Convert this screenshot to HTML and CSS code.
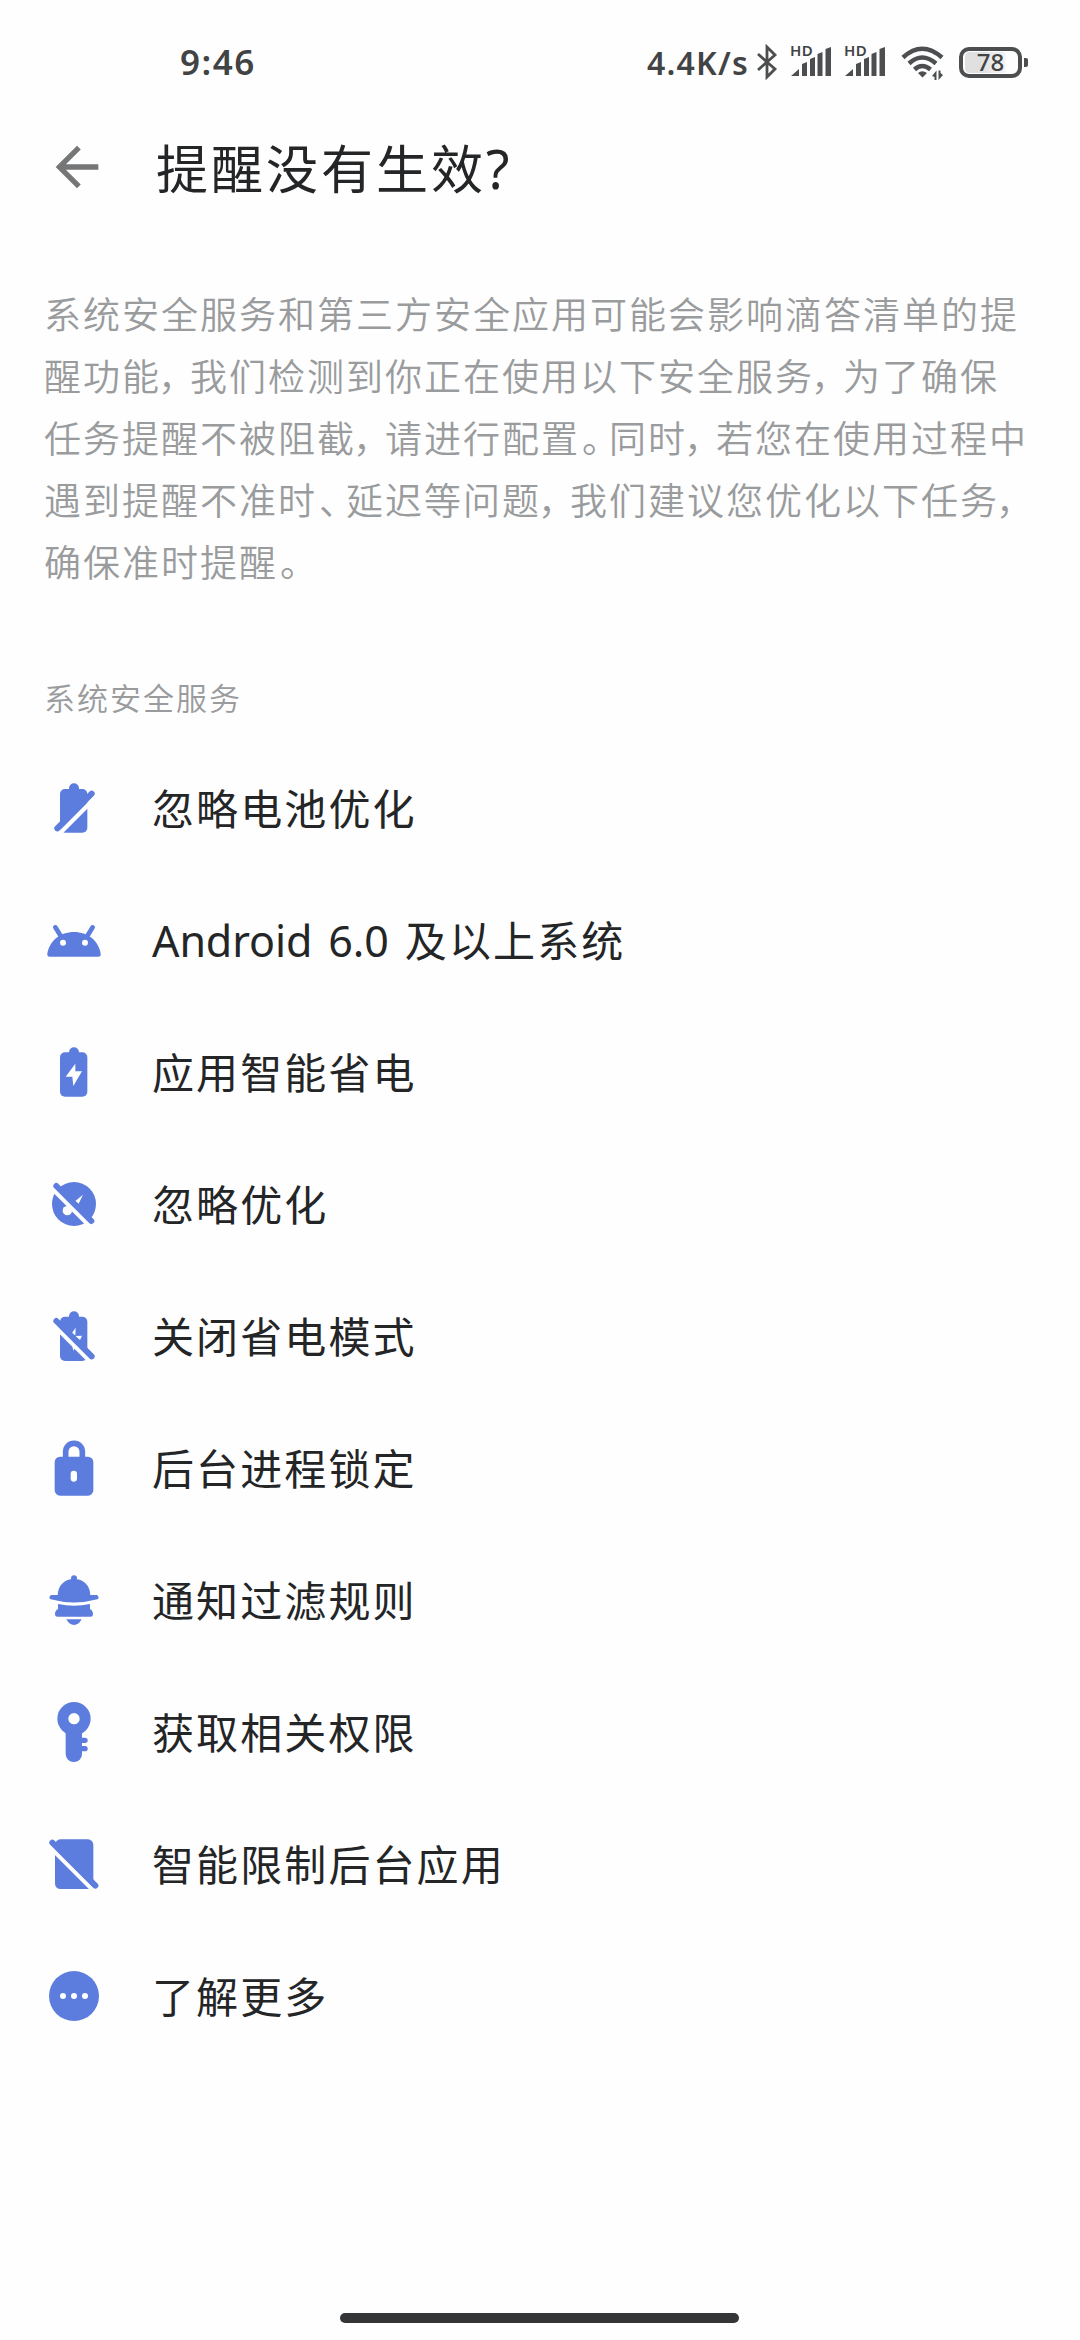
FILE: index.html
```html
<!DOCTYPE html>
<html lang="zh-CN">
<head>
<meta charset="utf-8">
<title>提醒没有生效?</title>
<link rel="stylesheet" href="styles.css">
</head>
<body>
<div class="screen">
  <div class="status">
    <span class="clock">9:46</span>
    <span class="speed">4.4K/s</span>
    <svg class="bluetooth" viewBox="0 0 22 36"><path d="M2 10 L19 25 L11 33 V3 L19 11 L2 26"/></svg>
    <span class="signal"><span class="hd">HD</span><svg viewBox="0 0 42 32"><path d="M1 30 L9 23 V30Z M12 18 L17 16 V30 H12Z M20 13 L25 11 V30 H20Z M27.500 8 L32.500 6 V30 H27.500Z M35.500 3 L41 1 V30 H35.500Z"/></svg></span>
    <span class="signal"><span class="hd">HD</span><svg viewBox="0 0 42 32"><path d="M1 30 L9 23 V30Z M12 18 L17 16 V30 H12Z M20 13 L25 11 V30 H20Z M27.500 8 L32.500 6 V30 H27.500Z M35.500 3 L41 1 V30 H35.500Z"/></svg></span>
    <svg class="wifi" viewBox="0 0 44 36"><path class="arc" d="M2 11.500 Q21 -6 41 11.500 M8 17.500 Q21 5.500 35 17.500 M13.500 23.500 Q21 16.500 29.500 23.500"/><path d="M17 27 Q21 23.500 26 27 L21.500 31.500Z M35.500 24.500 V34 H33.500 V31 L31 30Z M37.500 34 V24.500 H39.500 V27 L42 29Z"/></svg>
    <span class="battery"><span class="cell">78</span><span class="tip"></span></span>
  </div>
  <div class="header">
    <svg class="back" viewBox="0 0 24 24"><path d="M20 11H7.830l5.590-5.590L12 4l-8 8 8 8 1.410-1.410L7.830 13H20z"/></svg>
    <h1 class="title">提醒没有生效<span class="mark">?</span></h1>
  </div>
  <p class="intro">
    <span class="line">系统安全服务和第三方安全应用可能会影响滴答清单的提</span>
    <span class="line">醒功能<i class="comma">，</i>我们检测到你正在使用以下安全服务<i class="comma">，</i>为了确保</span>
    <span class="line">任务提醒不被阻截<i class="comma">，</i>请进行配置<i>。</i>同时<i class="comma">，</i>若您在使用过程中</span>
    <span class="line">遇到提醒不准时<i>、</i>延迟等问题<i class="comma">，</i>我们建议您优化以下任务<i class="comma">，</i></span>
    <span class="line">确保准时提醒<i>。</i></span>
  </p>
  <h2 class="section">系统安全服务</h2>
  <ul class="list">
    <li class="row">
      <svg class="icon" viewBox="-120 -120 240 240"><rect x="-15" y="-77" width="30" height="34" rx="15"/><rect x="-42" y="-60" width="82" height="131" rx="15"/><path class="gap" d="M-62 92 L82 -52"/><path class="bar" d="M-50 58 L53 -46"/></svg>
      <span>忽略电池优化</span>
    </li>
    <li class="row">
      <svg class="icon" viewBox="-120 -120 240 240"><path d="M-73 47 Q-81 47 -80 38 C-74 0 -42 -27 0 -27 S74 0 80 38 Q81 47 73 47Z"/><path class="antenna" d="M-56 -41 L-38 -12 M56 -41 L38 -12"/><circle class="hole" cx="-33" cy="5" r="9"/><circle class="hole" cx="33" cy="5" r="9"/></svg>
      <span><span class="latin">Android 6.0 </span>及以上系统</span>
    </li>
    <li class="row">
      <svg class="icon" viewBox="-120 -120 240 240"><rect x="-15" y="-77" width="30" height="34" rx="15"/><rect x="-42" y="-62" width="82" height="133" rx="15"/><path class="hole" d="M4 -28 L-25 11 H-5 L-2 39 L24 -5 H4Z"/></svg>
      <span>应用智能省电</span>
    </li>
    <li class="row">
      <svg class="icon" viewBox="-120 -120 240 240"><circle cx="0" cy="-3" r="66"/><circle class="hole" cx="-20" cy="17" r="14"/><path class="hole" d="M27 -31 L4 -12 L14 -4Z"/><path class="gap" d="M-80 -64 L70 86"/><path class="bar" d="M-53 -57 L52 48"/></svg>
      <span>忽略优化</span>
    </li>
    <li class="row">
      <svg class="icon" viewBox="-120 -120 240 240"><rect x="-15" y="-77" width="30" height="34" rx="15"/><rect x="-42" y="-61" width="82" height="133" rx="15"/><path class="hole" d="M5 -28 L-8 -9 L4 -5Z M24 -4 L3 -3 L18 9Z M-24 8 L-12 18 H-7 L-2 41 L6 26 L-14 4Z"/><path class="gap" d="M-80 -55 L75 100"/><path class="bar" d="M-53 -48 L53 58"/></svg>
      <span>关闭省电模式</span>
    </li>
    <li class="row">
      <svg class="icon" viewBox="-120 -120 240 240"><path class="shackle" d="M-25 -30 V-52 A25 25 0 0 1 25 -52 V-30"/><rect x="-58" y="-37" width="116" height="117" rx="16"/><rect class="hole" x="-10" y="5" width="19" height="33" rx="9.500"/></svg>
      <span>后台进程锁定</span>
    </li>
    <li class="row">
      <svg class="icon" viewBox="-120 -120 240 240"><circle cx="0" cy="-68" r="9"/><path d="M-49 -15 C-49 -48 -28 -66 0 -66 S49 -48 49 -15Z"/><path d="M-68 -18 H68 A7 7 0 0 1 70 -5 Q0 14 -70 -5 A7 7 0 0 1 -68 -18Z"/><path d="M-48 9 Q0 20 48 9 V24 Q58 30 57 41 Q56 47 50 47 H-50 Q-56 47 -57 41 Q-58 30 -48 24Z"/><path d="M-23 55 H23 Q14 72 0 72 Q-14 72 -23 55Z"/></svg>
      <span>通知过滤规则</span>
    </li>
    <li class="row">
      <svg class="icon" viewBox="-120 -120 240 240"><circle cx="0" cy="-43" r="50"/><rect x="-25" y="-30" width="49" height="117" rx="24"/><rect x="10" y="14" width="31" height="16" rx="8"/><rect x="10" y="39" width="31" height="16" rx="8"/><circle class="hole" cx="0" cy="-43" r="17"/></svg>
      <span>获取相关权限</span>
    </li>
    <li class="row">
      <svg class="icon" viewBox="-120 -120 240 240"><rect x="-57" y="-77" width="115" height="149" rx="16"/><path class="gap" d="M-85 -67 L75 93"/><path class="bar" d="M-65 -67 L64 62"/></svg>
      <span>智能限制后台应用</span>
    </li>
    <li class="row">
      <svg class="icon" viewBox="-120 -120 240 240"><circle cx="0" cy="-3" r="75"/><circle class="hole" cx="-33" cy="-3" r="9"/><circle class="hole" cx="0" cy="-3" r="9"/><circle class="hole" cx="33" cy="-3" r="9"/></svg>
      <span>了解更多</span>
    </li>
  </ul>
  <div class="home"></div>
</div>
</body>
</html>
```
FILE: styles.css
```css
* { box-sizing: border-box; margin: 0; padding: 0; }
body { background: #fefefe; font-family: "Noto Sans CJK SC", sans-serif; color: #242527; }
svg { display: block; flex: none; }
.screen { display: flex; flex-direction: column; width: 1080px; height: 2340px; overflow: hidden; }

.status { display: flex; align-items: center; height: 124px; padding-left: 180px; color: #414345; fill: #4c4e50; font-family: "Noto Sans", sans-serif; font-weight: 600; white-space: nowrap; }
.clock { width: 467px; font-size: 35px; line-height: 124px; letter-spacing: 1.500px; }
.speed { width: 109px; font-size: 32px; letter-spacing: 1.200px; }
.bluetooth { width: 22px; height: 36px; fill: none; stroke: #4c4e50; stroke-width: 2.800; }
.signal { position: relative; width: 42px; height: 32px; margin-left: 12px; }
.signal svg { width: 42px; height: 32px; }
.hd { position: absolute; left: 0; top: -5px; font-size: 15px; line-height: 18px; letter-spacing: .3px; }
.wifi { width: 44px; height: 36px; margin: 3px 0 0 15px; }
.arc { fill: none; stroke: #4c4e50; stroke-width: 4.500; }
.battery { display: flex; align-items: center; gap: 2px; margin-left: 14px; }
.cell { width: 63px; height: 31px; border: 4.500px solid #4c4e50; border-radius: 10px; font-size: 24px; line-height: 20px; text-align: center; font-weight: 500; background: linear-gradient(90deg, #e0e0e0 15px, #f3f3f3 40px, #fefefe 41px) content-box; padding: 1px 2px; }
.tip { width: 4px; height: 9px; border-radius: 0 2px 2px 0; background: #4c4e50; }

.header { display: flex; align-items: center; height: 86px; padding-left: 45px; }
.back { width: 64px; height: 64px; fill: #757677; }
.title { margin-left: 47px; font-size: 52px; line-height: 86px; letter-spacing: 3px; font-weight: 400; }
.mark { font-family: "Noto Sans", sans-serif; font-size: 54px; line-height: 1; }

.intro { display: flex; flex-direction: column; margin-top: 72px; padding-left: 44px; font-size: 37px; line-height: 62px; letter-spacing: 2px; color: #999b9d; font-weight: 350; }
.line { display: block; white-space: nowrap; }
.line i { font-style: normal; letter-spacing: -10px; padding-left: 2px; }
.line .comma { letter-spacing: -5px; margin-left: -3px; padding-left: 0; }
.section { margin-top: 75px; padding-left: 44px; font-size: 31px; line-height: 60px; letter-spacing: 2px; color: #999b9d; font-weight: 350; }

.list { list-style: none; margin-top: 16px; }
.row { display: flex; align-items: center; gap: 38px; height: 132px; padding-left: 34px; font-size: 42px; line-height: 60px; letter-spacing: 2.100px; white-space: pre; }
.row > span { padding-bottom: 4px; }
.latin { font-family: "Noto Sans", sans-serif; font-size: 43px; line-height: 1; letter-spacing: -.1px; word-spacing: 5px; }
.icon { width: 80px; height: 80px; fill: #5c7ddd; }
.hole { fill: #fefefe; }
.gap, .bar, .antenna, .shackle { fill: none; stroke: #5c7ddd; stroke-linecap: round; }
.gap { stroke: #fefefe; stroke-width: 13; }
.bar { stroke-width: 18; }
.antenna { stroke-width: 14; }
.shackle { stroke-width: 17; }

.home { width: 399px; height: 10px; margin: auto auto 17px 340px; border-radius: 5px; background: #333537; }
```
